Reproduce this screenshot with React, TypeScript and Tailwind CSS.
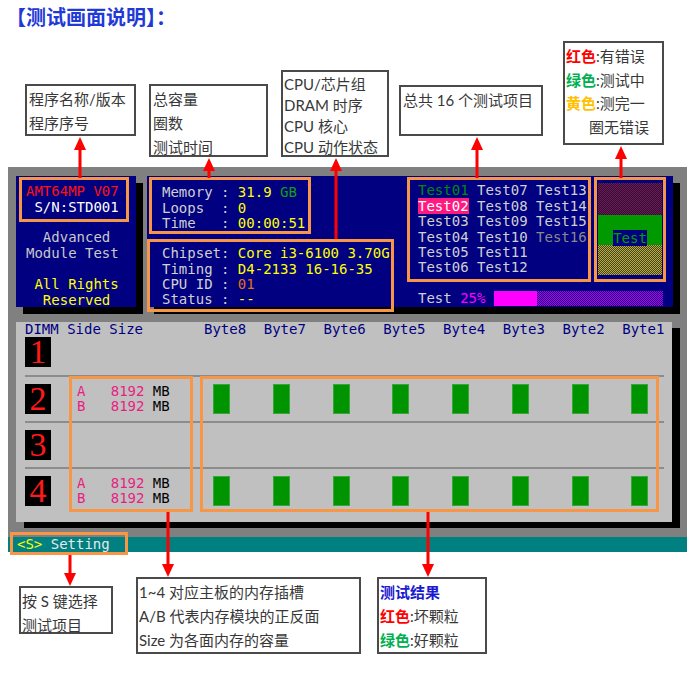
import React from 'react';

// DOS-style text: 14px mono gives ~8.43px per character, like the reference
const monoBase = "font-['DejaVu_Sans_Mono','Liberation_Mono',monospace] text-[14px] whitespace-pre";
const mono = `${monoBase} leading-[15.3px]`;
const note = "border-2 border-[#4a4a4a] bg-white";

const upArrows: [number, number, number][] = [
  [80, 137, 178],
  [209, 158, 178],
  [336, 158, 239],
  [477, 137, 178],
  [621, 146, 178],
];
const downArrows: [number, number, number][] = [
  [70, 555, 586],
  [168, 512, 577],
  [428, 512, 577],
];

const tests = [
  ['Test01', 'Test07', 'Test13'],
  ['Test02', 'Test08', 'Test14'],
  ['Test03', 'Test09', 'Test15'],
  ['Test04', 'Test10', 'Test16'],
  ['Test05', 'Test11'],
  ['Test06', 'Test12'],
];

const bytes = ['Byte8', 'Byte7', 'Byte6', 'Byte5', 'Byte4', 'Byte3', 'Byte2', 'Byte1'];

function TestName({ name }: { name: string }) {
  if (name === 'Test01') return <span className="text-[#008c00]">{name}</span>;
  if (name === 'Test02') return <span className="bg-[#ff1a80] text-white">{name}</span>;
  if (name === 'Test16') return <span className="text-[#8a8a8a]">{name}</span>;
  return <span className="text-[#d0d0d0]">{name}</span>;
}

function DimmRow({ num, filled, first }: { num: string; filled: boolean; first?: boolean }) {
  return (
    <div className={`flex h-[46px] items-center ${first ? '' : 'border-t-2 border-[#8c8c8c]'}`}>
      <div className="h-[30px] w-[26px] flex-none bg-black text-center font-['Liberation_Serif',serif] text-[34px] leading-[30px] text-[#ff1a1a]">
        {num}
      </div>
      <div className={`${mono} ml-[26px] w-[136px] flex-none`}>
        {filled && (
          <>
            <div>
              <span className="text-[#e81e82]">A   8192</span>
              <span className="text-black"> MB</span>
            </div>
            <div>
              <span className="text-[#e81e82]">B   8192</span>
              <span className="text-black"> MB</span>
            </div>
          </>
        )}
      </div>
      {filled && (
        <div className="flex gap-[42.75px]">
          {bytes.map(b => (
            <div key={b} className="h-[30px] w-[17px] flex-none border border-[#3aa53a] bg-[#009400]" />
          ))}
        </div>
      )}
    </div>
  );
}

export default function App() {
  return (
    <div className="relative h-[686px] w-[694px] overflow-hidden bg-white font-['Lato','Noto_Sans_CJK_SC',sans-serif] text-[#383838]">
      {/* Title */}
      <div className="h-[41px] pl-[6px] pt-[5px] font-['Noto_Sans_CJK_SC',sans-serif] text-[20px] font-bold leading-[24px] text-[#1f3ad6]">
        【测试画面说明】：
      </div>

      {/* Top callouts */}
      <div className="flex h-[126px] items-start text-[15px]">
        <div className={`${note} ml-[25px] mt-[43px] h-[52px] w-[111px] pl-[2px] pt-[1px] leading-[24px]`}>
          <div>程序名称/版本</div>
          <div>程序序号</div>
        </div>
        <div className={`${note} ml-[13px] mt-[43px] h-[73px] w-[119px] pl-[2px] pt-[1px] leading-[24px]`}>
          <div>总容量</div>
          <div>圈数</div>
          <div>测试时间</div>
        </div>
        <div className={`${note} ml-[13px] mt-[29px] h-[87px] w-[108px] pl-[1px] pt-[1.5px] leading-[21px]`}>
          <div>CPU/芯片组</div>
          <div>DRAM 时序</div>
          <div>CPU 核心</div>
          <div>CPU 动作状态</div>
        </div>
        <div className={`${note} ml-[10px] mt-[44px] h-[51px] w-[144px] pl-[2px] pt-[1px] leading-[24px]`}>
          总共 16 个测试项目
        </div>
        <div className={`${note} ml-[20px] mt-0 h-[104px] w-[101px] pl-[1px] pt-[2px] leading-[23.7px]`}>
          <div><b className="text-[#ff0000]">红色</b>:有错误</div>
          <div><b className="text-[#00b050]">绿色</b>:测试中</div>
          <div><b className="text-[#ffc000]">黄色</b>:测完一</div>
          <div className="pl-[23px]">圈无错误</div>
        </div>
      </div>

      {/* DOS screen */}
      <div className="ml-[8px] w-[679px]">
        <div className="h-[370px] bg-[#808080] pl-[8px] pt-[9px]">
          <div className="flex h-[131px]">
            {/* Program info */}
            <div className={`${mono} h-[131px] w-[120px] bg-[#000080] shadow-[7px_7px_0_#000]`}>
              <div className="ml-[3px] mt-[1px] h-[45px] w-[110px] border-[3px] border-[#f79646] pl-[4px] pt-[4.3px]">
                <div className="text-[#ff1010]">AMT64MP V07</div>
                <div className="text-white"> S/N:STD001</div>
              </div>
              <div className="mt-[8.3px] pl-[10px] text-[#c8c8c8]">
                <div>  Advanced</div>
                <div>Module Test</div>
              </div>
              <div className="mt-[16.4px] pl-[10px] text-[#ffff00]">
                <div> All Rights</div>
                <div>  Reserved</div>
              </div>
            </div>

            {/* Memory / chipset / tests */}
            <div className={`${mono} ml-[11px] flex h-[131px] w-[526px] bg-[#000080] text-[#d0d0d0] shadow-[7px_7px_0_#000]`}>
              <div className="w-[247px]">
                <div className="ml-[2px] mt-[1px] h-[57px] w-[162px] border-[3px] border-[#f79646] pl-[10px] pt-[5.3px]">
                  <div>Memory : <span className="text-[#ffff00]">31.9</span> <span className="text-[#10a010]">GB</span></div>
                  <div>Loops  : <span className="text-[#ffff00]">0</span></div>
                  <div>Time   : <span className="text-[#ffff00]">00:00:51</span></div>
                </div>
                <div className="mt-[5px] h-[73px] w-[247px] border-[3px] border-[#f79646] pl-[12px] pt-[4.3px]">
                  <div>Chipset: <span className="text-[#ffff00]">Core i3-6100 3.70G</span></div>
                  <div>Timing : <span className="text-[#ffff00]">D4-2133 16-16-35</span></div>
                  <div>CPU ID : <span className="text-[#e07018]">01</span></div>
                  <div>Status : <span className="text-[#ffff00]">--</span></div>
                </div>
              </div>

              <div className="ml-[13px] flex flex-col">
                <div className="mt-[1px] flex">
                  <div className="h-[105px] w-[184px] border-[3px] border-[#f79646] pl-[8px] pt-[3.3px] leading-[15.4px]">
                    {tests.map((row, i) => (
                      <div key={i}>
                        {row.map((t, j) => (
                          <React.Fragment key={t}>
                            {j > 0 && ' '}
                            <TestName name={t} />
                          </React.Fragment>
                        ))}
                      </div>
                    ))}
                  </div>
                  <div className="ml-[3px] h-[105px] w-[72px] border-[3px] border-[#f79646] px-[1px] pt-[3px]">
                    <div className="h-[32px] bg-[repeating-conic-gradient(#78184a_0_25%,#281040_0_50%)] bg-[length:2px_2px]" />
                    <div className="flex h-[30px] items-end justify-center bg-[#009a00]">
                      <span className="-mb-[1px] h-[16px] bg-[#000080] leading-[16px] text-[#00a000]">Test</span>
                    </div>
                    <div className="h-[30px] bg-[repeating-conic-gradient(#c0b400_0_25%,#3c3c60_0_50%)] bg-[length:2px_2px]" />
                  </div>
                </div>
                <div className="ml-[11px] mt-[9px] flex h-[15px] items-center">
                  <span className="w-[76px]">Test <span className="text-[#ff00ff]">25%</span></span>
                  <div className="flex h-[15px] w-[169px]">
                    <div className="w-[43px] bg-[#ff00ff]" />
                    <div className="flex-1 bg-[repeating-conic-gradient(#b000e0_0_25%,#1a0090_0_50%)] bg-[length:2px_2px]" />
                  </div>
                </div>
              </div>
            </div>
          </div>

          {/* DIMM table */}
          <div className="relative mt-[15px] h-[200px] w-[656px] bg-[#c0c0c0] pl-[9px] pr-[8px] shadow-[8px_6px_0_#000]">
            <div className={`${monoBase} flex h-[7px] leading-[14.5px] text-[#000080]`}>
              <span className="w-[179px] flex-none">DIMM Side Size</span>
              {bytes.map(b => (
                <span key={b} className="w-[59.75px] flex-none">{b}</span>
              ))}
            </div>
            <DimmRow num="1" filled={false} first />
            <DimmRow num="2" filled />
            <DimmRow num="3" filled={false} />
            <DimmRow num="4" filled />

            <div className="absolute left-[53px] top-[54px] h-[136px] w-[124px] border-[3px] border-[#f79646]" />
            <div className="absolute left-[184px] top-[54px] h-[136px] w-[459px] border-[3px] border-[#f79646]" />
          </div>
        </div>

        {/* Status bar */}
        <div className={`${monoBase} relative h-[15px] bg-[#008080] pl-[9px] leading-[15px] text-[#e8e8e8]`}>
          <span className="text-[#ffff00]">&lt;S&gt;</span> Setting
          <div className="absolute left-[2px] top-[-5px] h-[23px] w-[118px] border-[3px] border-[#f79646]" />
        </div>
      </div>

      {/* Bottom callouts */}
      <div className="flex items-start text-[15px]">
        <div className={`${note} ml-[19px] mt-[34px] h-[48px] w-[94px] pl-[1px] pt-[1px] leading-[24px]`}>
          <div>按 S 键选择</div>
          <div>测试项目</div>
        </div>
        <div className={`${note} ml-[23px] mt-[25px] h-[77px] w-[225px] pl-[1px] pt-[1px] leading-[24px]`}>
          <div>1~4 对应主板的内存插槽</div>
          <div>A/B 代表内存模块的正反面</div>
          <div>Size 为各面内存的容量</div>
        </div>
        <div className={`${note} ml-[16px] mt-[25px] h-[77px] w-[110px] pl-[1px] pt-[1px] leading-[24px]`}>
          <div className="font-bold text-[#1a1ad0]">测试结果</div>
          <div><b className="text-[#ff0000]">红色</b>:坏颗粒</div>
          <div><b className="text-[#00b050]">绿色</b>:好颗粒</div>
        </div>
      </div>

      {/* Callout arrows */}
      <svg className="pointer-events-none absolute inset-0" width="694" height="686" viewBox="0 0 694 686">
        {upArrows.map(([x, tip, end]) => (
          <g key={`u${x}`} fill="#ff0000">
            <path d={`M${x - 6} ${tip + 13} L${x} ${tip} L${x + 6} ${tip + 13} Z`} />
            <rect x={x - 1.5} y={tip + 12} width={3} height={end - tip - 12} />
          </g>
        ))}
        {downArrows.map(([x, start, tip]) => (
          <g key={`d${x}`} fill="#ff0000">
            <rect x={x - 1.5} y={start} width={3} height={tip - start - 12} />
            <path d={`M${x - 6} ${tip - 13} L${x} ${tip} L${x + 6} ${tip - 13} Z`} />
          </g>
        ))}
      </svg>
    </div>
  );
}
